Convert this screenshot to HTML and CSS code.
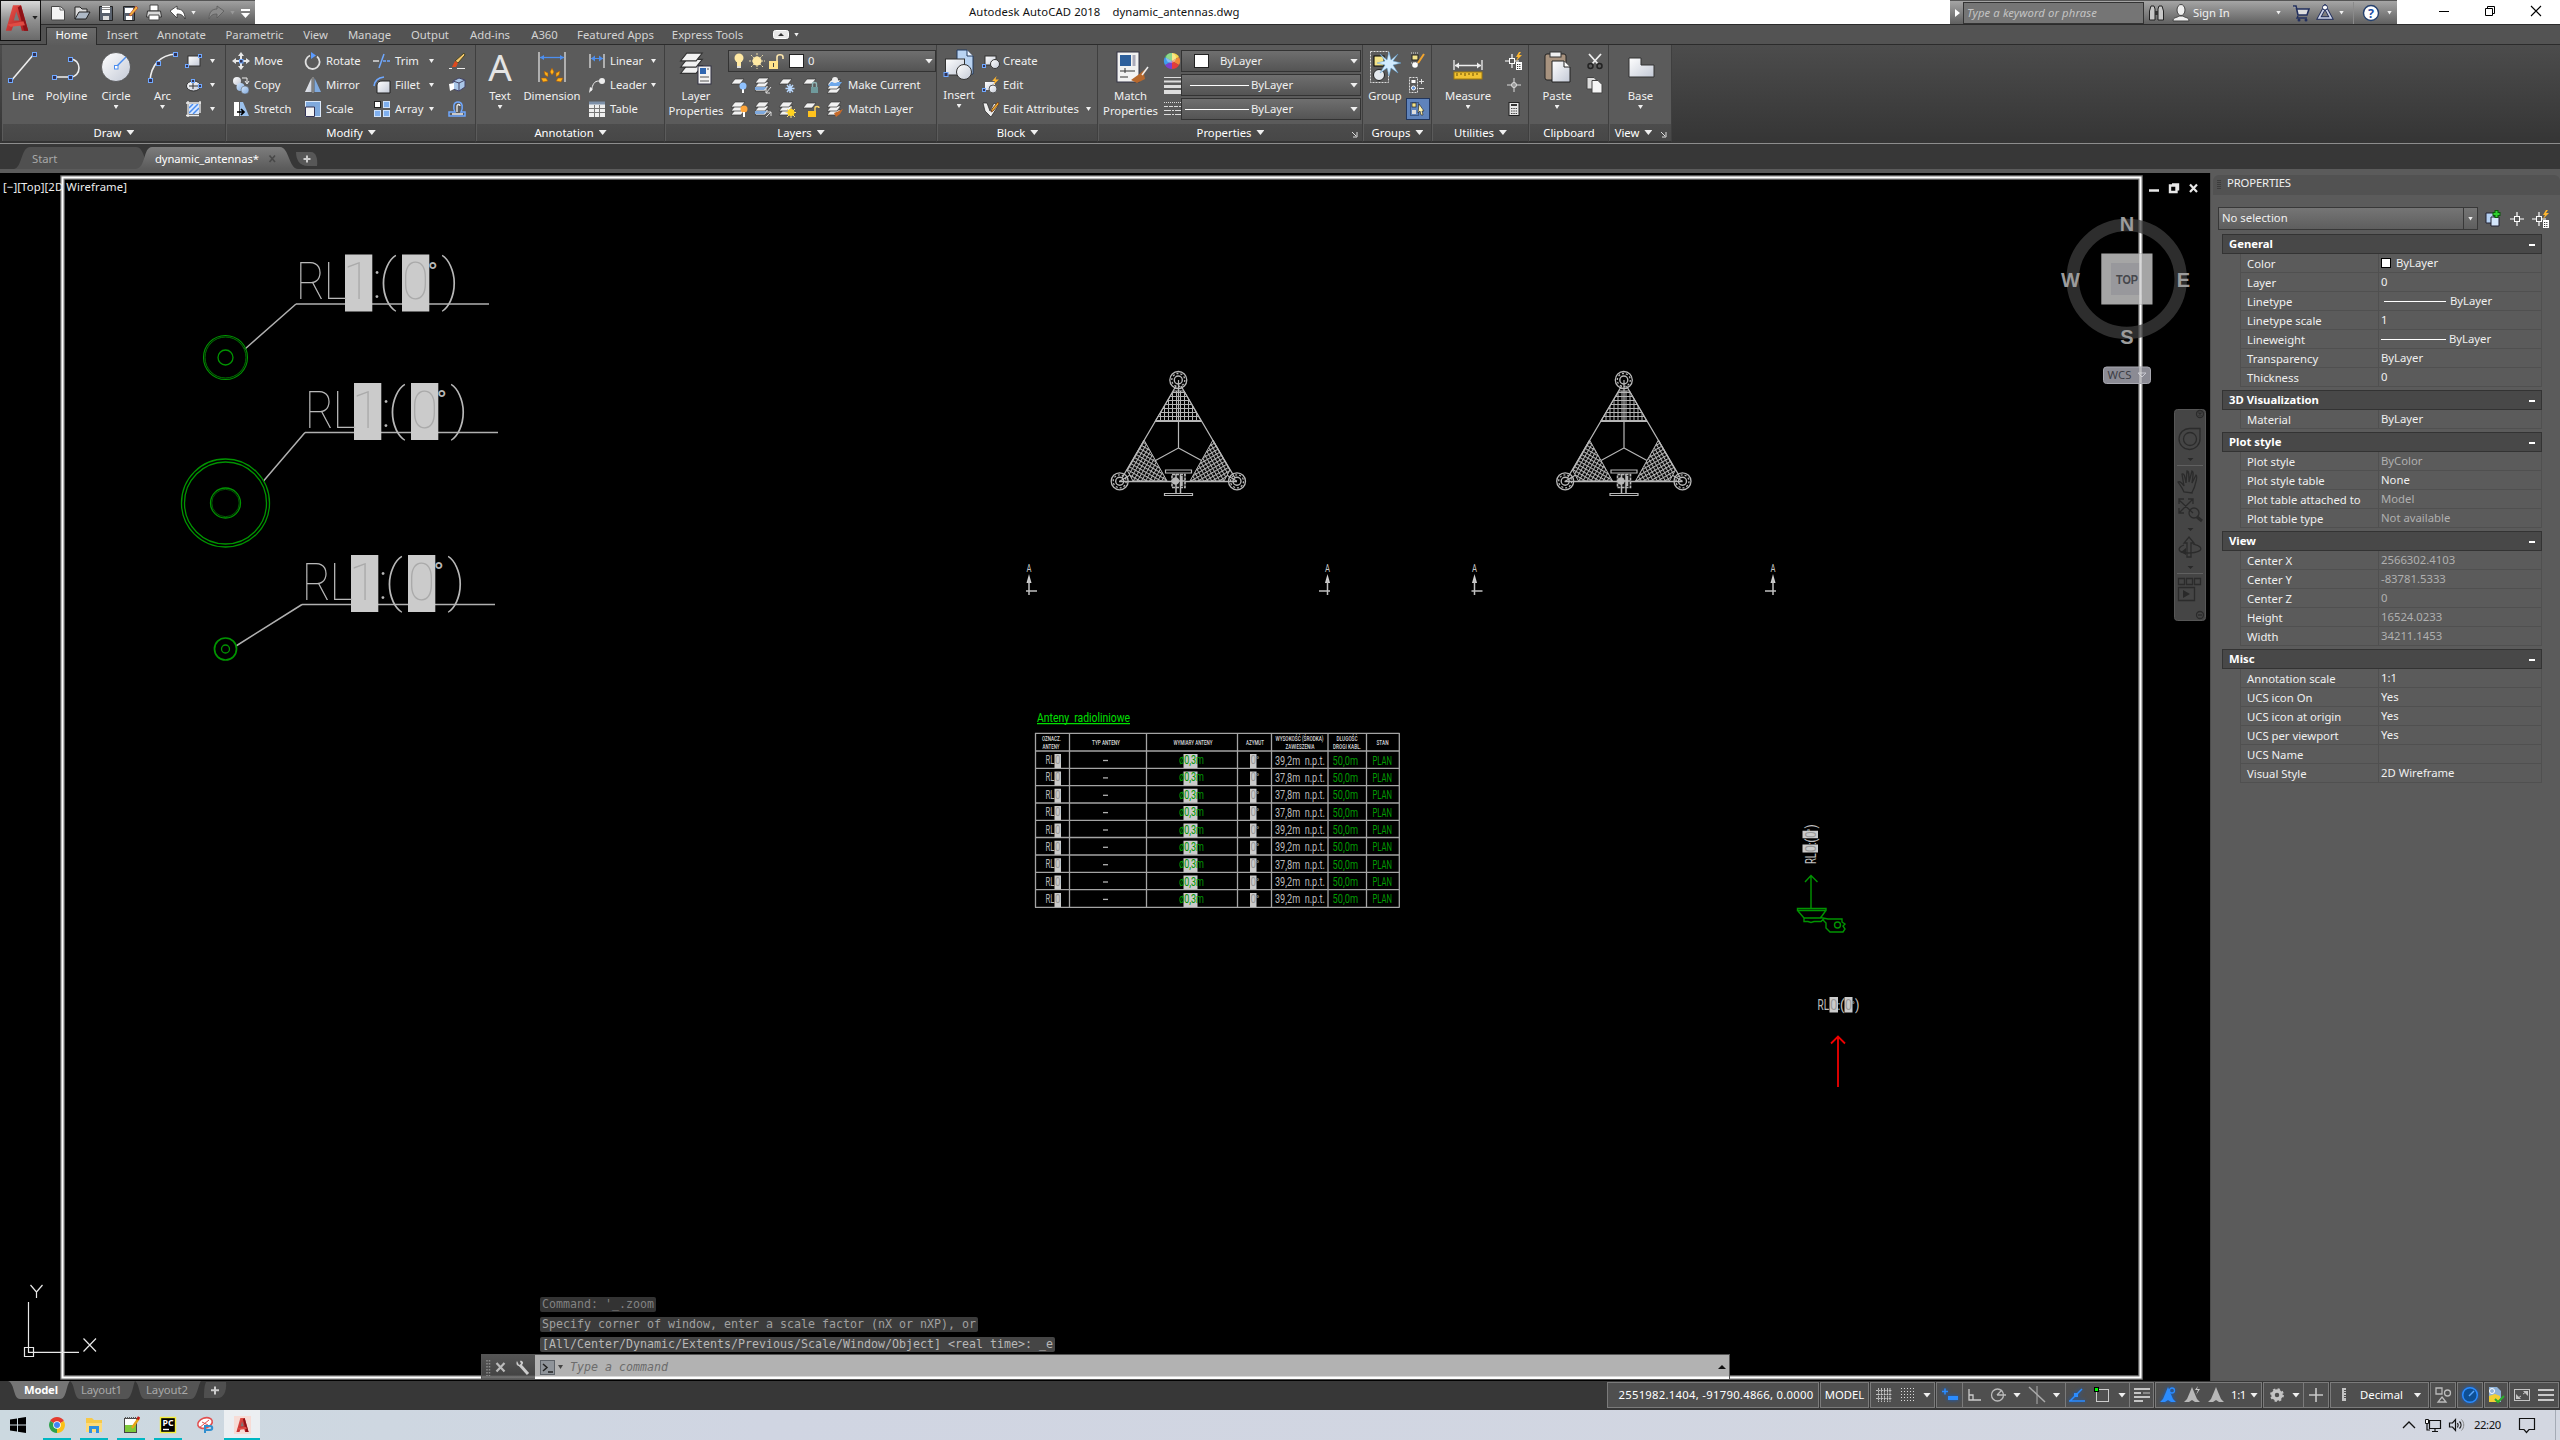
FILE: index.html
```html
<!DOCTYPE html>
<html lang="en">
<head>
<meta charset="utf-8">
<title>Autodesk AutoCAD 2018 - dynamic_antennas.dwg</title>
<link rel="stylesheet" href="styles.css">
</head>
<body>
<svg class="defs" width="0" height="0">
  <defs>
    <linearGradient id="gw" x1="0" y1="0" x2="1" y2="1"><stop offset="0" stop-color="#fff"/><stop offset="1" stop-color="#c3c9d6"/></linearGradient>
    <linearGradient id="gb" x1="0" y1="0" x2="1" y2="1"><stop offset="0" stop-color="#d5e6fa"/><stop offset="1" stop-color="#7fa9dd"/></linearGradient>
    <linearGradient id="gr" x1="0" y1="0" x2="1" y2="1"><stop offset="0" stop-color="#ef5b50"/><stop offset="1" stop-color="#a3141a"/></linearGradient>
    <symbol id="sheets" viewBox="0 0 18 18"><g fill="#f2f2f2" stroke="#333" stroke-width=".7"><path d="M5 10h10l-4 5H1z"/><path d="M5 6h10l-4 5H1z"/><path d="M5 2h10l-4 5H1z"/></g></symbol>
    <symbol id="sheet" viewBox="0 0 18 18"><path d="M5 3h9l-4 5H1z" fill="#f2f2f2" stroke="#333" stroke-width=".7"/></symbol>
    <symbol id="spark" viewBox="0 0 8 8"><path d="M5 0 1 4.500h2.500L2 8l5-5H4z" fill="#ffb62e"/></symbol>
    <symbol id="acad" viewBox="0 0 30 34"><path d="M10 1h10l9 32h-8l-2-8h-8l-3 8H1z" fill="url(#gr)"/><path d="M14 9l-3 11h7z" fill="#7a7a7a"/><path d="M20 1l9 32h-5L16 4z" fill="#8e1116"/><path d="M3 25l20-4 2 5-18 2z" fill="#e04b43"/></symbol>
    <symbol id="person" viewBox="0 0 18 18"><path d="M9 1l2 5 3 7 3 3-5 0-3-2-3 2H1l3-3 3-7z" fill="currentColor"/></symbol>
    <symbol id="quick" viewBox="0 0 18 18"><path d="M7 2v14M0 9h14" stroke="#fff" stroke-width="1.2"/><rect x="4.500" y="6.500" width="5" height="5" fill="#5b5b5b" stroke="#fff"/><path d="M14 0l-3 5h2l-2 4 6-6h-3l2-3z" fill="#ffb62e"/><rect x="11" y="10" width="6" height="8" fill="#fff"/><path d="M12 12.500h4M12 14.500h4M12 16.500h4" stroke="#333" stroke-dasharray="1 .8"/></symbol>
  </defs>
</svg>
<div class="app">
<header class="titlebar">
  <div class="appbtn"><svg width="24" height="28"><use href="#acad"/></svg><i class="c dark"></i></div>
  <div class="qat">
    <svg width="18" height="18"><path d="M2.500 2.500h9l4 3.500v10h-13z" fill="#f4f4f4" stroke="#444"/><path d="M11 2v4h5" fill="none" stroke="#666"/></svg>
    <svg width="18" height="18"><path d="M2 15V3h5l2 2h5v3" fill="#ddd" stroke="#222"/><path d="M2 15l4-7h11l-4 7z" fill="#aeb9c6" stroke="#222"/></svg>
    <svg width="18" height="18"><path d="M2.500 2.500h13v14h-13z" fill="#59616d" stroke="#222"/><path d="M5 2h8v7H5z" fill="#fff"/><path d="M5 3.500h8M5 5.500h8" stroke="#888"/><path d="M6 12h6v4H6z" fill="#ddd"/></svg>
    <svg width="18" height="18"><path d="M2.500 2.500h11v14h-11z" fill="#59616d" stroke="#222"/><path d="M4 4h8v5H4zM5 12h6v4H5z" fill="#fff"/><path d="M8 11l7-9 2 2-7 8z" fill="#f3b33e" stroke="#a33" stroke-width=".6"/></svg>
    <svg width="18" height="18"><path d="M5 1h8v6H5z" fill="#fff" stroke="#444"/><path d="M2.500 7h13l1 6h-15z" fill="#d9d9d9" stroke="#333"/><path d="M4 11h10v5H4z" fill="#fff" stroke="#444"/></svg>
    <svg width="18" height="18"><path d="M1 7l7-5v3c5 0 8 3 8 10-2-4-4-5-8-5v4z" fill="#fff" stroke="#333" stroke-width=".8"/></svg>
    <i class="c"></i>
    <svg width="18" height="18"><path d="M17 7l-7-5v3c-5 0-8 3-8 10 2-4 4-5 8-5v4z" fill="#8b8b8b" stroke="#5b5b5b" stroke-width=".8"/></svg>
    <i class="c dim"></i>
    <svg class="more" width="9" height="12"><path d="M0 3h9" stroke="#fff" stroke-width="2"/><path d="M0 6h9l-4.500 5z" fill="#fff"/></svg>
  </div>
  <div class="caption"><span>Autodesk AutoCAD 2018</span><span>dynamic_antennas.dwg</span></div>
  <div class="info">
    <div class="arrow"><svg width="5" height="8"><path d="M0 0l5 4-5 4z" fill="#fff"/></svg></div>
    <div class="search">Type a keyword or phrase</div>
    <svg class="bino" width="18" height="18"><g fill="#c8c8c8" stroke="#222"><path d="M3 2h3l1 3v11H1.500V7z"/><path d="M11 2h3l1.500 5v9H10V5z"/></g><path d="M7 7h3v4H7z" fill="#333"/></svg>
    <svg class="user" width="18" height="18"><ellipse cx="9" cy="6" rx="4" ry="5.500" fill="#eee" stroke="#444"/><path d="M1 17c0-4 4-3 6-5h4c2 2 6 1 6 5z" fill="#eee" stroke="#444"/></svg>
    <span class="sign">Sign In</span><i class="c"></i>
    <svg class="cart" width="18" height="18"><path d="M1 2h3l2 9h9l2-6H5" fill="#ddd" stroke="#23305e" stroke-width="1.6"/><path d="M6 12l-1 2h10" fill="none" stroke="#23305e" stroke-width="1.400"/><circle cx="7" cy="16" r="1.500" fill="#23305e"/><circle cx="14" cy="16" r="1.500" fill="#23305e"/></svg>
    <svg class="a360" width="18" height="18"><path d="M9 3L3 14h12z" fill="none" stroke="#23305e" stroke-width="3.600"/><path d="M9 3L3 14h12z" fill="none" stroke="#cfd6ea" stroke-width="1.600"/><circle cx="9" cy="3.500" r="2.500" fill="#fff" stroke="#23305e"/></svg>
    <i class="c"></i><b class="vsep"></b>
    <svg class="help" width="18" height="18"><circle cx="9" cy="9" r="7.500" fill="#fff" stroke="#24406e" stroke-width="1.400"/><text x="9" y="13.500" text-anchor="middle" font-size="12.500" font-weight="700" fill="#1d4fa5">?</text></svg>
    <i class="c"></i>
  </div>
  <div class="winbtns">
    <svg width="12" height="12"><path d="M1 6.500h10" stroke="#000"/></svg>
    <svg width="12" height="12"><path d="M1.500 3.500h7v7h-7zM3.500 3.500v-2h7v7h-2" fill="none" stroke="#000"/></svg>
    <svg width="12" height="12"><path d="M1 1l10 10M11 1L1 11" stroke="#000" stroke-width="1.100"/></svg>
  </div>
</header>

<nav class="tabs">
  <span class="on">Home</span><span>Insert</span><span>Annotate</span><span>Parametric</span><span>View</span><span>Manage</span><span>Output</span><span>Add-ins</span><span>A360</span><span>Featured Apps</span><span>Express Tools</span>
  <div class="mini"><svg width="16" height="9"><rect x=".5" y=".5" width="15" height="8" rx="2" fill="#e8e8e8" stroke="#fff"/><path d="M5 6h6L8 3z" fill="#333"/></svg><i class="c"></i></div>
</nav>

<div class="ribbon">
  <section class="panel draw"><div class="body">
    <div class="big"><svg width="34" height="36"><path d="M5 32L28 5" stroke="#eee" stroke-width="1.600"/><g fill="#335" stroke="#6fa8ff"><rect x="2.500" y="29.500" width="4" height="4"/><rect x="26.500" y="3.500" width="4" height="4"/></g></svg>Line</div>
    <div class="big"><svg width="34" height="36"><path d="M4 28h16c12 0 12-18 0-18" fill="none" stroke="#eee" stroke-width="1.600"/><g fill="#335" stroke="#6fa8ff"><rect x="2.500" y="26.500" width="4" height="4"/><rect x="18.500" y="26.500" width="4" height="4"/><rect x="18.500" y="8.500" width="4" height="4"/></g></svg>Polyline</div>
    <div class="big"><svg width="34" height="36"><circle cx="17" cy="18" r="14.500" fill="url(#gw)" stroke="#333" stroke-width=".6"/><path d="M17 18l10-10" stroke="#4a8df0" stroke-width="1.400"/><rect x="15.500" y="16.500" width="3.500" height="3.500" fill="#fff" stroke="#4a8df0"/></svg>Circle<i class="c"></i></div>
    <div class="big"><svg width="34" height="36"><path d="M4 32C5 16 14 6 30 5" fill="none" stroke="#eee" stroke-width="1.600"/><g fill="#335" stroke="#6fa8ff"><rect x="2.500" y="29.500" width="4" height="4"/><rect x="10.500" y="12.500" width="4" height="4"/><rect x="27.500" y="3.500" width="4" height="4"/></g></svg>Arc<i class="c"></i></div>
    <div class="col">
      <div class="row"><svg width="18" height="18"><rect x="3" y="4" width="12" height="10" fill="url(#gw)" stroke="#333"/><rect x=".5" y="12.500" width="3" height="3" fill="#335" stroke="#6fa8ff"/><rect x="13.500" y="2.500" width="3" height="3" fill="#335" stroke="#6fa8ff"/></svg><i class="c"></i></div>
      <div class="row"><svg width="18" height="18"><ellipse cx="8.500" cy="10" rx="7" ry="5" fill="url(#gw)" stroke="#333"/><path d="M8 6v7M4 10h9" stroke="#333"/><rect x="6.500" y="3.500" width="3" height="3" fill="#335" stroke="#6fa8ff"/><rect x="13.500" y="8.500" width="3" height="3" fill="#335" stroke="#6fa8ff"/></svg><i class="c"></i></div>
      <div class="row"><svg width="18" height="18"><rect x="4" y="4" width="10" height="10" fill="#d7e7ff"/><path d="M4 8l4-4M4 13l9-9M8 14l6-6" stroke="#4a8df0" stroke-width="1.500"/><path d="M3 1v16M1 3h15M15 1v12M1 15.500h13" stroke="#eee" stroke-width="1.300"/></svg><i class="c"></i></div>
    </div></div>
    <h3>Draw <i class="c lg"></i></h3></section>

  <section class="panel modify"><div class="body">
    <div class="col">
      <div class="row"><svg width="18" height="18"><path d="M9 0l3 4h-2v3H8V4H6zM9 18l3-4h-2v-3H8v3H6zM0 9l4-3v2h3v2H4v2zM18 9l-4-3v2h-3v2h3v2z" fill="#e8e8e8"/><rect x="7.500" y="7.500" width="3.500" height="3.500" fill="#335" stroke="#6fa8ff"/></svg>Move</div>
      <div class="row"><svg width="18" height="18"><circle cx="5" cy="5" r="4" fill="url(#gw)"/><circle cx="8.500" cy="11" r="4" fill="url(#gb)"/><circle cx="13" cy="14" r="4" fill="url(#gb)" stroke="#555" stroke-width=".5"/><path d="M10 2h5v5m-2-2l2 3 2-3" fill="none" stroke="#eee"/></svg>Copy</div>
      <div class="row"><svg width="18" height="18"><path d="M2 2h5v14H2z" fill="#fff"/><path d="M8 2l3 0 6 14H8z" fill="#9bc1ec"/><path d="M5 12h7m-3-3l3 3-3 3" fill="none" stroke="#000" stroke-width="1.700"/></svg>Stretch</div>
    </div>
    <div class="col">
      <div class="row"><svg width="18" height="18"><path d="M13 4.500A7 7 0 1 1 6 3.500" fill="none" stroke="#e0e0e0" stroke-width="1.800"/><path d="M7 0l5 3.500L7 7z" fill="#5b9bff"/></svg>Rotate</div>
      <div class="row"><svg width="18" height="18"><path d="M7.500 2v14H1z" fill="url(#gw)"/><path d="M10.500 2v14H17z" fill="#7fa9dd"/><path d="M9 1v16" stroke="#bbb" stroke-width=".8"/></svg>Mirror</div>
      <div class="row"><svg width="18" height="18"><rect x="1.500" y="1.500" width="15" height="15" fill="#7fa9dd" stroke="#dce9fa"/><path d="M1.500 7h9v9.500h-9z" fill="#f4f4f4" stroke="#335"/></svg>Scale</div>
    </div>
    <div class="col wide">
      <div class="row"><svg width="18" height="18"><path d="M0 9h6" stroke="#ddd" stroke-width="1.500"/><path d="M6 16L11 2" stroke="#6fa8ff" stroke-width="1.500"/><path d="M10 9h8" stroke="#6fa8ff" stroke-width="1.500" stroke-dasharray="3 1"/></svg>Trim<i class="c"></i></div>
      <div class="row"><svg width="18" height="18"><path d="M4 17V9c0-3 3-4 5-4h8v12z" fill="url(#gw)" stroke="#222"/><path d="M1 10C2 4 5 2 11 1" fill="none" stroke="#6fa8ff" stroke-width="1.600"/></svg>Fillet<i class="c"></i></div>
      <div class="row"><svg width="18" height="18"><rect x="1.500" y="1.500" width="6" height="6" fill="#fff" stroke="#222"/><g fill="#7fb0f0" stroke="#cfe2fb"><rect x="10.500" y="1.500" width="6" height="6"/><rect x="1.500" y="10.500" width="6" height="6"/><rect x="10.500" y="10.500" width="6" height="6"/></g></svg>Array<i class="c"></i></div>
    </div>
    <div class="col">
      <div class="row"><svg width="18" height="18"><path d="M16 1l1 2-7 8-3-2z" fill="#f5c56b" stroke="#442"/><path d="M7 9l3 2-2 4H4z" fill="#e14a1d"/><path d="M1 16.500h3M9 16.500h8" stroke="#eee"/></svg></div>
      <div class="row"><svg width="18" height="18"><path d="M5 5l6-3 6 2v7l-6 4-6-2z" fill="#a9c6e8" stroke="#446"/><path d="M1 8l5-1v6l-4 2z" fill="#fff"/><path d="M11 7v8M5 5l6 2 6-3" stroke="#446" fill="none"/></svg></div>
      <div class="row"><svg width="18" height="18"><path d="M1 16h16v-4h-4c2-4 2-10-3-10S5 8 7 12H1z" fill="none" stroke="#6fa8ff" stroke-width="1.500"/><path d="M4 14h11M9 12V6c0-2 3-2 3 0" stroke="#eee" fill="none" stroke-width="1.300"/></svg></div>
    </div></div>
    <h3>Modify <i class="c lg"></i></h3></section>

  <section class="panel annotation"><div class="body">
    <div class="big"><span class="bigA">A</span>Text<i class="c"></i></div>
    <div class="big"><svg width="34" height="36"><path d="M4 3v30M30 3v30" stroke="#ddd" stroke-width="1.300"/><path d="M5 8.500h24" stroke="#4d8ff0" stroke-width="1.300"/><path d="M5 8.500l4-2.500v5zM29 8.500l-4-2.500v5z" fill="#4d8ff0"/><g fill="#ffb31a" stroke="#a4560c" stroke-width=".6"><path d="M17 19l2 4-2 3-2-3zM9 22l4 2 0 4-3-2zM25 22l-4 2 0 4 3-2zM6 29l5 0 2 3-5 1zM28 29l-5 0-2 3 5 1z"/></g></svg>Dimension</div>
    <div class="col wide">
      <div class="row"><svg width="18" height="18"><path d="M2 2v14M16 2v14" stroke="#ddd" stroke-width="1.300"/><path d="M3 6.500h12" stroke="#4d8ff0"/><path d="M3 6.500l4-3v6zM15 6.500l-4-3v6z" fill="#4d8ff0"/></svg>Linear<i class="c"></i></div>
      <div class="row"><svg width="18" height="18"><circle cx="14" cy="5" r="3" fill="#eee"/><path d="M11 5C6 5 5 8 3 15" fill="none" stroke="#eee"/><path d="M1 17l1-6 3 2z" fill="#eee"/></svg>Leader<i class="c"></i></div>
      <div class="row"><svg width="18" height="18"><rect x="1" y="2" width="16" height="15" fill="#eee"/><path d="M1 3h16" stroke="#7d90a8" stroke-width="3"/><path d="M1 8.500h16M1 12.500h16M6.500 5v12M11.500 5v12" stroke="#777"/></svg>Table</div>
    </div></div>
    <h3>Annotation <i class="c lg"></i></h3></section>

  <section class="panel layers"><div class="body">
    <div class="big"><svg width="36" height="36"><use href="#sheets" x="1" y="1" width="28" height="28"/><rect x="20" y="17" width="13" height="18" fill="#f3f3f3" stroke="#334"/><rect x="22" y="19" width="6" height="6" fill="#2f66b0"/><path d="M29 20h2M22 28h9M22 32h9" stroke="#555"/></svg>Layer<br>Properties</div>
    <div class="col">
      <div class="combo layer"><svg width="14" height="18"><circle cx="6" cy="6" r="4.500" fill="#ffe9a3"/><path d="M4 9h4v5H4z" fill="#ffe9a3"/><path d="M4 15h4" stroke="#ddd" stroke-width="2"/></svg><svg width="18" height="18"><path d="M9 1v16M1 9h16M3 3l12 12M15 3L3 15" stroke="#e8d9a8" stroke-dasharray="2 1"/><circle cx="9" cy="9" r="4.500" fill="#ffe9a3"/></svg><svg width="18" height="18"><rect x="2" y="9" width="9" height="8" fill="#ffe38b"/><path d="M10 9V5c0-3 6-3 6 0v2" fill="none" stroke="#ffe9b0" stroke-width="1.600"/><path d="M6.500 11v4" stroke="#444"/></svg><b class="sw"></b>0<i class="c lg"></i></div>
      <div class="row icons"><svg width="18" height="18"><use href="#sheet"/><path d="M13 12v5" stroke="#fff" stroke-width="2"/><circle cx="13" cy="10" r="3.500" fill="#8fc2ff"/></svg><svg width="18" height="18"><use href="#sheets"/><path d="M1 11h12l-3 3H1z" fill="#7fa9dd"/><path d="M17 11l-5 6m0-4v4h4" stroke="#ddd" fill="none"/></svg><svg width="18" height="18"><use href="#sheet"/><path d="M12 8v9M7.500 12.500h9M9 9l6 7M15 9l-6 7" stroke="#b9d9ff" stroke-width="1.400"/></svg><svg width="18" height="18"><use href="#sheet"/><rect x="9" y="11" width="7" height="6" fill="#6f9a9c"/><path d="M10.500 11V8c0-2 4-2 4 0v3" fill="none" stroke="#8fb4b5" stroke-width="1.400"/></svg><svg width="18" height="18"><use href="#sheets" y="2"/><path d="M5 6h11l-3 4H2z" fill="#6fa8ea"/><circle cx="9" cy="4" r="3" fill="#eee"/></svg>Make Current</div>
      <div class="row icons"><svg width="18" height="18"><use href="#sheets"/><circle cx="14" cy="9" r="3.500" fill="#ffa63a"/><path d="M14 12v5" stroke="#fff" stroke-width="2"/></svg><svg width="18" height="18"><use href="#sheets"/><path d="M1 11h12l-3 3H1z" fill="#7fa9dd"/><path d="M12 17l5-5m-4 0h4v4" stroke="#ddd" fill="none"/></svg><svg width="18" height="18"><use href="#sheets"/><path d="M13 7v11M7.500 12.500h11M9 9l8 8M17 9l-8 8" stroke="#ffe277"/><circle cx="13" cy="12.500" r="3.500" fill="#ffd21f"/></svg><svg width="18" height="18"><use href="#sheet"/><rect x="6" y="11" width="8" height="6" fill="#ffc21c"/><path d="M13 11V8c0-2 4-2 4 0" fill="none" stroke="#ffd766" stroke-width="1.400"/></svg><svg width="18" height="18"><use href="#sheets"/><path d="M17 9l-3 5-4 3-2-4 5-2z" fill="#c66a2a"/></svg>Match Layer</div>
    </div></div>
    <h3>Layers <i class="c lg"></i></h3></section>

  <section class="panel block"><div class="body">
    <div class="big ins"><svg width="34" height="36"><path d="M15 2h10l6 6v18H15z" fill="#b9d3f2" stroke="#223a5f"/><path d="M25 2v6h6" fill="#eef5ff" stroke="#223a5f"/><rect x="3.500" y="11" width="19" height="16" fill="url(#gw)" stroke="#333"/><circle cx="22" cy="24" r="7.500" fill="url(#gw)" stroke="#333"/><rect x="2" y="24.500" width="4" height="4" fill="#335" stroke="#6fa8ff"/></svg>Insert<i class="c"></i></div>
    <div class="col wide">
      <div class="row"><svg width="18" height="18"><rect x="3" y="4" width="11" height="9" fill="url(#gw)" stroke="#333"/><circle cx="13" cy="12" r="4.500" fill="url(#gw)" stroke="#333"/><rect x=".5" y="12.500" width="3" height="3" fill="#335" stroke="#6fa8ff"/></svg>Create</div>
      <div class="row"><svg width="18" height="18"><rect x="3" y="6" width="10" height="8" fill="url(#gw)"/><circle cx="11" cy="13" r="4" fill="url(#gw)" stroke="#555"/><rect x=".5" y="12.500" width="3" height="3" fill="#335" stroke="#6fa8ff"/><use href="#spark" x="9" y="0" width="9" height="9"/></svg>Edit</div>
      <div class="row"><svg width="18" height="18"><path d="M1 3h4l3 8 4-8 4 3-7 11L3 11z" fill="#eee" stroke="#222" stroke-width=".7"/><path d="M16 2l1 2-6 7-2 1 1-3z" fill="#f5b52e" stroke="#742"/></svg>Edit Attributes<i class="c"></i></div>
    </div></div>
    <h3>Block <i class="c lg"></i></h3></section>

  <section class="panel props"><div class="body">
    <div class="big"><svg width="36" height="36"><rect x="4" y="3" width="22" height="30" fill="#f2f2f2" stroke="#334"/><rect x="7" y="6" width="11" height="11" fill="#2d5f9c"/><path d="M21 6v11" stroke="#aab" stroke-width="3"/><path d="M7 22h15M12 19v5M7 28h8" stroke="#333"/><path d="M34 19l-4 3-5 4-7 5 6 3 8-4-1-5z" fill="#b7682c"/><path d="M35 18l-6 8" stroke="#eee" stroke-width="1.500"/></svg>Match<br>Properties</div>
    <div class="col mid">
      <svg width="18" height="22"><g transform="translate(9 11)"><path d="M0 0V-8A8 8 0 0 1 7 -4z" fill="#f7d84a"/><path d="M0 0L7-4A8 8 0 0 1 7 4z" fill="#f08a3a"/><path d="M0 0L7 4A8 8 0 0 1 0 8z" fill="#e23b3b"/><path d="M0 0V8A8 8 0 0 1-7 4z" fill="#7a3fd0"/><path d="M0 0L-7 4A8 8 0 0 1-7-4z" fill="#3f9cf0"/><path d="M0 0L-7-4A8 8 0 0 1 0-8z" fill="#4fc04f"/><circle cx="-1" cy="-3" r="5" fill="#fff" opacity=".35"/></g></svg>
      <svg width="18" height="22"><path d="M1 3.500h17" stroke="#ddd"/><path d="M1 7.500h17" stroke="#ddd" stroke-width="2"/><path d="M1 12.500h17" stroke="#ddd" stroke-width="3"/><path d="M1 18h17" stroke="#ddd" stroke-width="4"/></svg>
      <svg width="18" height="22"><path d="M1 4.500h17" stroke="#ddd" stroke-dasharray="1 1"/><path d="M1 8.500h17" stroke="#ddd" stroke-dasharray="4 1"/><path d="M1 12.500h17M1 16.500h17" stroke="#ddd" stroke-dasharray="7 1 2 1"/></svg>
    </div>
    <div class="col combos">
      <div class="combo c1"><b class="sw"></b>ByLayer<i class="c lg"></i></div>
      <div class="combo c2"><b class="ln"></b>ByLayer<i class="c lg"></i></div>
      <div class="combo c3"><b class="ln"></b>ByLayer<i class="c lg"></i></div>
    </div></div>
    <h3>Properties <i class="c lg"></i><svg class="dlg" width="6" height="7"><path d="M0 1l4 4M5 1v5H1" stroke="#ddd" fill="none"/></svg></h3></section>

  <section class="panel groups"><div class="body">
    <div class="big"><svg width="36" height="36"><rect x="3.500" y="2.500" width="18" height="31" fill="none" stroke="#ddd" stroke-dasharray="2 1"/><rect x="7" y="7" width="10" height="10" fill="#f3e38a" stroke="#000"/><circle cx="12" cy="26" r="5.500" fill="#e4e9ee" stroke="#222"/><path d="M22 3l2 8 7-6-5 7 8 2-8 2 5 8-7-5-2 8-2-8-7 5 5-8-8-2 8-2-5-7 7 6z" fill="#d2ecff" stroke="#5f9fd0" stroke-width=".5"/></svg>Group</div>
    <div class="col">
      <div class="row"><svg width="22" height="22"><path d="M5 3h8M5 13h8" stroke="#ddd" stroke-dasharray="1 1"/><rect x="6" y="5" width="6" height="5" fill="#f3e38a" stroke="#222"/><circle cx="9" cy="15" r="2.800" fill="#fff"/><path d="M18 4l-6 9" stroke="#f3a52e" stroke-width="2"/></svg></div>
      <div class="row"><svg width="22" height="22"><rect x="3.500" y="3.500" width="8" height="15" fill="none" stroke="#ddd" stroke-dasharray="2 1"/><rect x="5.500" y="6" width="4" height="3" fill="#fff"/><circle cx="7.500" cy="14" r="2" fill="#5d8fd6" stroke="#fff"/><path d="M13 7.500h5M15.500 5v5M13 14.500h5" stroke="#ddd"/></svg></div>
      <div class="row"><svg class="sel" width="24" height="22"><rect x=".5" y=".5" width="23" height="21" fill="#5f83bb" stroke="#22365c"/><rect x="4.500" y="4.500" width="8" height="13" fill="none" stroke="#203050" stroke-dasharray="1 1"/><rect x="6" y="5" width="4" height="4" fill="#f3e38a" stroke="#111" stroke-width=".6"/><rect x="6" y="12" width="4" height="4" fill="#ddd"/><path d="M13 6l5 7-2 0 1 4-2 0-1-4-2 2z" fill="#fff3b0" stroke="#222" stroke-width=".6"/></svg></div>
    </div></div>
    <h3>Groups <i class="c lg"></i></h3></section>

  <section class="panel util"><div class="body">
    <div class="big"><svg width="34" height="36"><path d="M3 11v10M31 11v10M4 16.500h26" stroke="#eee" stroke-width="1.300"/><path d="M4 16.500l4-3v6zM30 16.500l-4-3v6z" fill="#eee"/><rect x="3" y="23" width="28" height="7" fill="#f1c232" stroke="#a07a10"/><path d="M6 24v3M10 24v2M14 24v3M18 24v2M22 24v3M26 24v2" stroke="#6b4e05"/></svg>Measure<i class="c"></i></div>
    <div class="col">
      <div class="row"><svg width="18" height="18"><use href="#quick"/></svg></div>
      <div class="row"><svg width="18" height="18"><path d="M9 2v14M2 9h14" stroke="#ddd"/><circle cx="9" cy="9" r="2.500" fill="#999" stroke="#ddd"/></svg></div>
      <div class="row"><svg width="18" height="18"><rect x="4" y="2.500" width="10" height="13" fill="#e6e6e6" stroke="#222"/><path d="M6 5h6" stroke="#333" stroke-width="2"/><path d="M6 8.500h6M6 11h6M6 13.500h6" stroke="#444" stroke-dasharray="1.500 .8"/></svg></div>
    </div></div>
    <h3>Utilities <i class="c lg"></i></h3></section>

  <section class="panel clip"><div class="body">
    <div class="big"><svg width="34" height="36"><rect x="5" y="5" width="21" height="26" rx="2" fill="#a8937f" stroke="#222"/><rect x="10" y="3" width="11" height="5" fill="#f0f0f0" stroke="#333"/><path d="M12 12h12l6 6v15H12z" fill="url(#gw)" stroke="#222"/><path d="M24 12v6h6" fill="#fff" stroke="#222"/></svg>Paste<i class="c"></i></div>
    <div class="col">
      <div class="row"><svg width="18" height="18"><path d="M3 2l9 10M15 2L6 12" stroke="#eee" stroke-width="1.800"/><circle cx="4.500" cy="14" r="2.500" fill="none" stroke="#222" stroke-width="1.500"/><circle cx="13.500" cy="14" r="2.500" fill="none" stroke="#222" stroke-width="1.500"/></svg></div>
      <div class="row"><svg width="18" height="18"><path d="M1 1.500h7l3 3V13H1z" fill="#ddd" stroke="#444"/><path d="M6 4.500h6l4 4V17H6z" fill="#f6f6f6" stroke="#444"/></svg></div>
    </div></div>
    <h3>Clipboard</h3></section>

  <section class="panel view"><div class="body">
    <div class="big"><svg width="34" height="36"><path d="M5 9h12v7h13v12H5z" fill="url(#gw)" stroke="#333"/></svg>Base<i class="c"></i></div></div>
    <h3>View <i class="c lg"></i><svg class="dlg" width="6" height="7"><path d="M0 1l4 4M5 1v5H1" stroke="#ddd" fill="none"/></svg></h3></section>
</div>

<div class="files">
  <svg width="340" height="26" viewBox="0 144 340 26">
    <defs><linearGradient id="ta" x1="0" y1="0" x2="0" y2="1"><stop offset="0" stop-color="#7d7d7d"/><stop offset="1" stop-color="#5b5b5b"/></linearGradient></defs>
    <path d="M14 169c8-1 7-22 16-22h106c9 0 9 20 14 22z" fill="#505050"/>
    <path d="M136 169c10-1 7-22 16-22h128c9 0 9 22 18 22z" fill="url(#ta)"/>
    <path d="M296 152h15c5 0 7 7 6 14h-9c-9 0-12-7-12-14z" fill="#575757"/>
    <path d="M303.500 159h7M307 155.500v7" stroke="#ccc" stroke-width="2"/>
    <path d="M269.500 155.500l5.500 6.500M275 155.500l-5.500 6.500" stroke="#484848" stroke-width="1.600"/>
    <text x="32" y="163" fill="#a8a8a8">Start</text>
    <text x="155" y="163" fill="#fff" textLength="104">dynamic_antennas*</text>
  </svg>
</div>

<main class="work">
  <div class="canvas">
  <svg class="drawing" width="2210" height="1208" viewBox="0 173 2210 1208">
    <defs>
      <pattern id="h0" width="4" height="4" patternUnits="userSpaceOnUse"><path d="M0 .5h4M.5 0v4" stroke="#b5b5b5" stroke-width="1"/></pattern>
      <pattern id="h1" width="3.500" height="3.500" patternUnits="userSpaceOnUse" patternTransform="rotate(30)"><path d="M0 .5h4M.5 0v4" stroke="#b5b5b5" stroke-width="1"/></pattern>
      <pattern id="h2" width="3.500" height="3.500" patternUnits="userSpaceOnUse" patternTransform="rotate(-30)"><path d="M0 .5h4M.5 0v4" stroke="#b5b5b5" stroke-width="1"/></pattern>
      <g id="label"><path d="M296 304h193" stroke="#b0b0b0" stroke-width="1.500"/>
        <path d="M345 254.500h27.300V311.500H345zM402 254.500h27.300V311.500H402z" fill="#cbcbcb"/>
        <g class="cad thin" font-size="52" fill="#b8b8b8"><text x="296" y="299" textLength="29" lengthAdjust="spacingAndGlyphs">R</text><text x="323.500" y="299" textLength="24" lengthAdjust="spacingAndGlyphs">L</text><text x="372.500" y="298">:</text><text x="378" y="299" font-size="56" textLength="19" lengthAdjust="spacingAndGlyphs">(</text><text class="deg" x="427.500" y="281.500" font-size="28">°</text><text x="441" y="299" font-size="56" textLength="19" lengthAdjust="spacingAndGlyphs">)</text></g>
        <g class="cad thin" font-size="52" fill="#aaa"><text x="343" y="299">1</text><text x="402" y="299" textLength="27" lengthAdjust="spacingAndGlyphs">0</text></g>
      </g>
      <g id="node" fill="none" stroke="#b8b8b8"><circle r="8.500" stroke-width="1.300"/><circle r="6.500" stroke-width="1.300" stroke-dasharray="2 2"/><circle r="4" stroke-width="1.400"/></g>
      <g id="tower" fill="none" stroke="#b8b8b8">
        <path d="M1173.500 391h10.500l17.500 30.500H1155z" fill="url(#h0)"/><path d="M1144 440l23 41h-34l-6-11z" fill="url(#h1)"/><path d="M1213 440l-23 41h34l6-11z" fill="url(#h2)"/>
        <path d="M1176 386l-54 92M1181 386l54 92M1119 481.500h118" stroke-width="1.300"/>
        <path d="M1178.500 380v68l-23 12.500M1178.500 448l23 12.500M1119.700 481.300l10-6M1237 481.300l-10-6" stroke-width="1.200"/>
        <use href="#node" x="1178.300" y="380"/><use href="#node" x="1119.700" y="481.300"/><use href="#node" x="1237" y="481.300"/>
        <path d="M1165.500 470h26v3h-26zM1164.500 493.500h28v2h-28z" stroke-width="1.200"/>
        <rect x="1172" y="474.500" width="13" height="13" fill="#111" stroke-width="1.600" stroke-dasharray="3 1"/><circle cx="1175.500" cy="481" r="3.300" fill="#b8b8b8"/>
        <path d="M1176 474v20M1180.500 474v20M1172 481h13M1182 476v10" stroke-width="1.500"/>
      </g>
      <g id="mark"><text x="1029" y="572" text-anchor="middle" font-size="11" class="cad" fill="#c8c8c8" textLength="5" lengthAdjust="spacingAndGlyphs">A</text><path d="M1029 574l2.500 9h-5z" fill="#d0d0d0"/><path d="M1029 580v15" stroke="#c0c0c0" stroke-width="1.500"/></g>
    </defs>
    <rect x="62.500" y="177.500" width="2078" height="1200" fill="none" stroke="#777" stroke-width="4.500"/>
    <rect x="62.500" y="177.500" width="2078" height="1200" fill="none" stroke="#fff" stroke-width="2"/>
    <text x="3" y="191" fill="#eee" textLength="124">[−][Top][2D Wireframe]</text>

    <use href="#label"/><use href="#label" x="9" y="128.500"/><use href="#label" x="6" y="300.500"/>
    <path d="M296 304l-51 45M305 432.500L263.500 481M302 604.500L236 646" stroke="#b0b0b0" stroke-width="1.500"/>
    <g fill="none" stroke="#009400" stroke-width="1.300"><circle cx="225.500" cy="357.500" r="22" stroke-width="1.100"/><circle cx="225.500" cy="357.500" r="20.500" stroke-width=".8"/><circle cx="225.500" cy="357.500" r="7.500"/><circle cx="225.500" cy="503" r="44"/><circle cx="225.500" cy="503" r="41"/><circle cx="225.500" cy="503" r="15"/><circle cx="225.500" cy="503" r="13.700" stroke-width=".6"/><circle cx="225.500" cy="649" r="11" stroke-width="1.700"/><circle cx="225.500" cy="649" r="4"/></g>

    <use href="#tower"/><use href="#tower" x="445.500"/>
    <use href="#mark"/><use href="#mark" x="298.500"/><use href="#mark" x="445.500"/><use href="#mark" x="744"/>
    <path d="M1026 591h11M1319 591h11M1471.500 591h11M1765 591h11" stroke="#c0c0c0" stroke-width="1.500"/>

    <text x="1037" y="722" class="cad" font-size="13.500" fill="#00e000" textLength="93" lengthAdjust="spacingAndGlyphs">Anteny&#160; radioliniowe</text>
    <path d="M1037 723.700h93" stroke="#00e000" stroke-width="1.200"/>
    <path d="M1035 733.300h364.500M1035 751h364.500M1035 768.400h364.500M1035 785.700h364.500M1035 803h364.500M1035 820.400h364.500M1035 837.500h364.500M1035 855h364.500M1035 872.400h364.500M1035 889.700h364.500M1035 907.300h364.500M1035.500 733v174.500M1069.500 733v174.500M1146.500 733v174.500M1237.500 733v174.500M1271.500 733v174.500M1328 733v174.500M1366.500 733v174.500M1399.300 733v174.500" stroke="#a4a4a4" stroke-width="1.300"/>
    <g class="cad hd" font-size="6.300" fill="#dcdcdc" text-anchor="middle">
      <text x="1051.500" y="740.500" textLength="19" lengthAdjust="spacingAndGlyphs">OZNACZ.</text><text x="1051" y="749" textLength="17" lengthAdjust="spacingAndGlyphs">ANTENY</text>
      <text x="1106" y="745.300" textLength="28" lengthAdjust="spacingAndGlyphs">TYP ANTENY</text><text x="1193" y="745.300" textLength="39" lengthAdjust="spacingAndGlyphs">WYMIARY ANTENY</text><text x="1255" y="745.300" textLength="18" lengthAdjust="spacingAndGlyphs">AZYMUT</text>
      <text x="1299.500" y="741" textLength="48" lengthAdjust="spacingAndGlyphs">WYSOKOŚĆ (ŚRODKA)</text><text x="1300" y="749.300" textLength="29" lengthAdjust="spacingAndGlyphs">ZAWIESZENIA</text>
      <text x="1347" y="741" textLength="21" lengthAdjust="spacingAndGlyphs">DŁUGOŚĆ</text><text x="1347" y="749.300" textLength="28" lengthAdjust="spacingAndGlyphs">DROGI KABL.</text><text x="1382.500" y="745.300" textLength="12" lengthAdjust="spacingAndGlyphs">STAN</text>
    </g>
    <defs><g id="tr" class="cad" font-size="12.500" fill="#b8b8b8"><path d="M1054.500 754h6.500v14h-6.500zM1183.500 754h14v14h-14zM1250 754h6.500v14h-6.500z" fill="#cbcbcb"/><text x="1045.500" y="764" textLength="9" lengthAdjust="spacingAndGlyphs">RL</text><text x="1055" y="764" fill="#999" textLength="5.500" lengthAdjust="spacingAndGlyphs">0</text><path d="M1103 760.500h5" stroke="#b0b0b0" stroke-width="1.300"/><text x="1179" y="764" fill="#009400" textLength="25" lengthAdjust="spacingAndGlyphs">ø0,3m</text><text x="1250.500" y="764" fill="#999" textLength="5.500" lengthAdjust="spacingAndGlyphs">0</text><text x="1256" y="763" font-size="9">°</text><text x="1332.500" y="764.500" fill="#009c00" textLength="25.500" lengthAdjust="spacingAndGlyphs">50,0m</text><text x="1372.500" y="764.500" fill="#009c00" textLength="19.500" lengthAdjust="spacingAndGlyphs">PLAN</text></g></defs>
    <use href="#tr"/><use href="#tr" y="17.400"/><use href="#tr" y="34.800"/><use href="#tr" y="52.100"/><use href="#tr" y="69.500"/><use href="#tr" y="86.800"/><use href="#tr" y="104.200"/><use href="#tr" y="121.500"/><use href="#tr" y="138.900"/>
    <g class="cad" font-size="12.500" fill="#bcbcbc"><text x="1275" y="764.500" textLength="50" lengthAdjust="spacingAndGlyphs">39,2m&#160; n.p.t.</text><text x="1275" y="782" textLength="50" lengthAdjust="spacingAndGlyphs">37,8m&#160; n.p.t.</text><text x="1275" y="799.300" textLength="50" lengthAdjust="spacingAndGlyphs">37,8m&#160; n.p.t.</text><text x="1275" y="816.600" textLength="50" lengthAdjust="spacingAndGlyphs">37,8m&#160; n.p.t.</text><text x="1275" y="834" textLength="50" lengthAdjust="spacingAndGlyphs">39,2m&#160; n.p.t.</text><text x="1275" y="851.300" textLength="50" lengthAdjust="spacingAndGlyphs">39,2m&#160; n.p.t.</text><text x="1275" y="868.700" textLength="50" lengthAdjust="spacingAndGlyphs">37,8m&#160; n.p.t.</text><text x="1275" y="886" textLength="50" lengthAdjust="spacingAndGlyphs">39,2m&#160; n.p.t.</text><text x="1275" y="903.400" textLength="50" lengthAdjust="spacingAndGlyphs">39,2m&#160; n.p.t.</text></g>

    <defs><g id="rl" class="cad" font-size="15.500" fill="#c0c0c0"><path d="M12 -13h8.500V2.500H12zM27 -13h8V2.500H27z" fill="#cbcbcb"/><text x="0" y="0" textLength="11.500" lengthAdjust="spacingAndGlyphs">RL</text><text x="12.500" y="0" fill="#999" textLength="7.500" lengthAdjust="spacingAndGlyphs">0</text><text x="20" y="0" font-size="12">:</text><text x="22.500" y="0" textLength="4.500" lengthAdjust="spacingAndGlyphs">(</text><text x="27.500" y="0" fill="#999" textLength="7" lengthAdjust="spacingAndGlyphs">0</text><text x="34" y="-2" font-size="9">°</text><text x="37.500" y="0" textLength="4.500" lengthAdjust="spacingAndGlyphs">)</text></g></defs>
    <use href="#rl" transform="translate(1817.500 1010)"/><use href="#rl" transform="translate(1815.500 864) rotate(-90) scale(.95 1)"/>
    <g fill="none" stroke="#009400" stroke-width="1.400"><path d="M1811 909v-33.500M1805 882l6-6.500 6.500 6.500M1797.500 908.500h28.500v2h-28.500zM1798 911l6 7h16.500l5-7M1804 918v3.500h4l3 1 3-1h7l3-3M1820 917.500l8 1.500h14v3l3 2-2 2 2 3-2 3h-13l-4-4v-5l-3-3"/><circle cx="1837.500" cy="925" r="3"/></g>
    <path d="M1838 1087v-50M1831 1043.500l7-7 7 7" fill="none" stroke="#f00000" stroke-width="1.800"/>

    <g fill="none" stroke="#e8e8e8" stroke-width="1.200"><path d="M28.500 1302v50.300H79M24.500 1347.500h9v9h-9zM30.500 1285l6 7v6M42.500 1285l-6 7M83.500 1338.500l12.500 13M96 1338.500l-12.500 13"/></g>

    <circle cx="2126.700" cy="279" r="54" fill="none" stroke="#3c3c3c" stroke-opacity=".75" stroke-width="12.500"/>
    <g class="nesw" fill="#9c9c9c" text-anchor="middle" font-size="20" font-weight="700"><text x="2127" y="231">N</text><text x="2127" y="343.500">S</text><text x="2070.500" y="286.500">W</text><text x="2183.500" y="286.500">E</text></g>
    <path d="M2101.300 253.500h51.200v51h-51.200z" fill="#a5a5a5"/><path d="M2111 263h31v32h-31z" fill="#98989c"/>
    <text x="2127" y="283.500" class="nesw" text-anchor="middle" font-size="13" font-weight="700" fill="#45474c" textLength="22" lengthAdjust="spacingAndGlyphs">TOP</text>
    <path d="M2140.500 254v50" stroke="#d8d8d8" stroke-width="2.500"/>
    <rect x="2103.500" y="367" width="47" height="16.500" rx="3" fill="#8b8b94" stroke="#a8a8b0"/><text x="2107.500" y="379" fill="#3d3d45" textLength="24">WCS</text><path d="M2138 373h8l-4 4z" fill="none" stroke="#c8c8d0"/><path d="M2140.500 367v16" stroke="#ddd" stroke-width="2.500" opacity=".6"/>
    <path d="M2149 190.500h10M2170 185.500h6.500v6.500h-6.500zM2172 184.500h6v6" fill="none" stroke="#e8e8e8" stroke-width="2.400"/><path d="M2190 184.500l7 7.500M2197 184.500l-7 7.500" stroke="#e8e8e8" stroke-width="2.200"/>

    <rect x="2174.500" y="409.500" width="31" height="211" rx="3" fill="#454545" stroke="#565656"/>
    <g fill="none" stroke="#2b2b2b" stroke-width="1.300"><circle cx="2200" cy="414" r="3.500"/><path d="M2198.500 412.500l3 3M2201.500 412.500l-3 3"/><path d="M2190 428.500h10v10a10.500 10.500 0 1 1-10-10z"/><circle cx="2190" cy="439" r="6.500"/><path d="M2184 492c-2-5-4-7-6-10 2-1 4 1 6 4l-2-12c2-1 3 2 4 9l1-12c2 0 2 3 2 11l3-11c2 1 1 4 0 12l4-8c2 1 0 6-1 10-1 5-3 6-3 8z"/><path d="M2179 500l14 13M2193 499l-14 14M2179 504v-5h5M2188 499h5v5M2179 508v5h5"/><circle cx="2194" cy="513" r="5"/><path d="M2197 517l5 4" stroke-width="3"/><path d="M2187 557v-14h-3l5-6 5 6h-3v14z"/><path d="M2184 545c-8 3-6 8 4 8s15-3 12-6-5-2-7-3"/><path d="M2178.500 578.500h6v6h-6zM2186.500 578.500h6v6h-6zM2194.500 578.500h6v6h-6zM2178.500 587.500h16v13h-16z"/><circle cx="2200" cy="615" r="3.500"/><path d="M2198 615h4"/></g>
    <path d="M2187.500 458h6l-3 3zM2187.500 528h6l-3 3zM2187.500 566h6l-3 3zM2183 590l7 4-7 4zM2181 552l5-4v7z" fill="#292929"/><path d="M2177 465.500h26M2177 573.500h26" stroke="#606060"/>
  </svg>
  <div class="history"><span>Command: '_.zoom</span><span>Specify corner of window, enter a scale factor (nX or nXP), or</span><span>[All/Center/Dynamic/Extents/Previous/Scale/Window/Object] &lt;real time&gt;: _e</span></div>
  <div class="cmd"><div class="cmdl"><svg width="53" height="25"><path d="M5 5v16M7.500 5v16" stroke="#8d8d8d" stroke-width="1.500" stroke-dasharray="1.500 1.500"/><path d="M14.500 8l8 8.500M22.500 8l-8 8.500" stroke="#bbb" stroke-width="2.200"/><path d="M38 10l8 9" stroke="#ccc" stroke-width="3"/><path d="M35 6c-2 4 2 7 5 4s-1-5-2-4l1 3-2 1z" fill="#ccc"/></svg></div>
    <svg class="prompt" width="28" height="15"><rect x=".5" y=".5" width="14" height="14" fill="#8f949a" stroke="#5d6268"/><path d="M3 4l4 3.500L3 11M8 12h5" stroke="#222" fill="none" stroke-width="1.500"/><path d="M18 5h5l-2.500 4z" fill="#444"/></svg><em>Type a command</em><i class="c up"></i></div>
  </div>

  <aside class="palette">
    <div class="ptitle"><b class="grip"></b>PROPERTIES</div>
    <div class="pbar"><div class="pcombo">No selection<span><i class="c"></i></span></div>
      <svg width="18" height="20"><path d="M2 4h8v10H2z" fill="#b5d1f3" stroke="#223"/><path d="M7 8h8v9H7z" fill="#d5e6fb" stroke="#223"/><path d="M12.500 1v8M8.500 5h8" stroke="#0b5a0b" stroke-width="4"/><path d="M12.500 2v6M9.500 5h6" stroke="#2fd02f" stroke-width="2"/></svg>
      <svg width="18" height="20"><path d="M9 3v14M2 10h14" stroke="#fff" stroke-width="1.200"/><rect x="6.500" y="7.500" width="5" height="5" fill="#5b5b5b" stroke="#fff"/></svg>
      <svg width="18" height="20"><use href="#quick"/></svg></div>
    <h4>General</h4>
    <dl><dt>Color</dt><dd><b class="psw"></b>ByLayer</dd><dt>Layer</dt><dd>0</dd><dt>Linetype</dt><dd><b class="pln a"></b>ByLayer</dd><dt>Linetype scale</dt><dd>1</dd><dt>Lineweight</dt><dd><b class="pln"></b>ByLayer</dd><dt>Transparency</dt><dd>ByLayer</dd><dt>Thickness</dt><dd>0</dd></dl>
    <h4>3D Visualization</h4>
    <dl><dt>Material</dt><dd>ByLayer</dd></dl>
    <h4>Plot style</h4>
    <dl><dt>Plot style</dt><dd class="ro">ByColor</dd><dt>Plot style table</dt><dd>None</dd><dt>Plot table attached to</dt><dd class="ro">Model</dd><dt>Plot table type</dt><dd class="ro">Not available</dd></dl>
    <h4>View</h4>
    <dl><dt>Center X</dt><dd class="ro">2566302.4103</dd><dt>Center Y</dt><dd class="ro">-83781.5333</dd><dt>Center Z</dt><dd class="ro">0</dd><dt>Height</dt><dd class="ro">16524.0233</dd><dt>Width</dt><dd class="ro">34211.1453</dd></dl>
    <h4>Misc</h4>
    <dl><dt>Annotation scale</dt><dd>1:1</dd><dt>UCS icon On</dt><dd>Yes</dd><dt>UCS icon at origin</dt><dd>Yes</dd><dt>UCS per viewport</dt><dd>Yes</dd><dt>UCS Name</dt><dd></dd><dt>Visual Style</dt><dd>2D Wireframe</dd></dl>
  </aside>
</main>

<footer class="status">
  <svg class="layouts" width="240" height="28" viewBox="0 1381 240 28">
    <path d="M8 1381c7 2 5 18 12 18h40c7 0 6-14 10-18z" fill="#757575"/><path d="M70 1381c5 3 4 18 10 18h46c6 0 7-14 9-18z" fill="#545454"/><path d="M135 1381c5 3 4 18 10 18h46c6 0 7-14 10-18z" fill="#545454"/><path d="M206 1382h20c1 10-3 16-8 16h-14c0-6 0-12 2-16z" fill="#4f4f4f"/>
    <text x="24" y="1394" font-weight="700" fill="#fff" textLength="34">Model</text><text x="81" y="1394" fill="#a9a9a9" textLength="41">Layout1</text><text x="146" y="1394" fill="#a9a9a9" textLength="42">Layout2</text><path d="M211 1390.300h8M215 1386.500v8" stroke="#ccc" stroke-width="2"/></svg>
  <div class="cells">
    <div class="cell" style="width:212px"><span class="coord">2551982.1404, -91790.4866, 0.0000</span></div>
    <div class="cell" style="width:49px"><span style="width:47px">MODEL</span></div>
    <div class="cell" style="width:65px"><span style="width:25px"><svg width="16" height="16"><path d="M2.500 1v14M5.500 1v14M8.500 1v14M11.500 1v14M14 1v14M0 3.500h16M0 7.500h16M0 11.500h16" stroke="#ccc" stroke-width=".9" stroke-dasharray="2 .6"/></svg></span><span style="width:23px"><svg width="16" height="16"><path d="M1 1.500h14M1 4.500h14M1 7.500h14M1 10.500h14M1 13.500h14" stroke="#ddd" stroke-dasharray="1 2"/></svg></span><span style="width:16px"><i class="c lg"></i></span></div>
    <div class="cell" style="width:218px"><span class="blue" style="width:25px"><svg width="18" height="16"><path d="M1 4.500h6M4 1.500v6" stroke="#2b8cff" stroke-width="1.500"/><rect x="7" y="9" width="10" height="4" fill="#2b8cff"/></svg></span><span class="div" style="width:25px"><svg width="16" height="16"><path d="M2 2v11h12M2 8h4v5" stroke="#ccc" fill="none" stroke-width="1.300"/></svg></span><span style="width:22px"><svg width="16" height="16"><circle cx="7.500" cy="8" r="6" fill="none" stroke="#bbb" stroke-width="1.300"/><path d="M7 8h9M7 8l5-5" stroke="#bbb" stroke-width="1.300"/></svg></span><span style="width:16px"><i class="c lg"></i></span><span style="width:23px"><svg width="18" height="20"><path d="M9 1v18" stroke="#999" stroke-width="1.300"/><path d="M1 2l16 15" stroke="#aaa" stroke-width="1.500"/></svg></span><span style="width:17px"><i class="c lg"></i></span><span class="div blue" style="width:23px"><svg width="16" height="16"><path d="M1 14L13 2M0 14h16" stroke="#2b8cff" stroke-width="1.500"/><rect x="5" y="6" width="4" height="4" fill="#2b8cff"/></svg></span><span style="width:27px"><svg width="16" height="16"><rect x="2.500" y="2.500" width="12" height="12" fill="none" stroke="#ccc"/><rect x=".5" y=".5" width="4" height="4" fill="#0f0" stroke="#000"/></svg></span><span style="width:14px"><i class="c lg"></i></span><span class="div" style="width:24px"><svg width="16" height="16"><path d="M0 2h16M0 6h7M0 10h16M0 14h9" stroke="#c4c4c4" stroke-width="1.800"/><path d="M9 6h7" stroke="#c4c4c4" stroke-width="1"/></svg></span></div>
    <div class="cell" style="width:107px"><span class="blue" style="width:24px;color:#2b8cff"><svg width="18" height="18"><use href="#person"/><circle cx="13" cy="4.500" r="2.500" fill="none" stroke="#2b8cff" stroke-width="1.300"/></svg></span><span style="width:24px;color:#b8b8b8"><svg width="18" height="18"><use href="#person"/><path d="M15 0l-3 4h3l-2 5 4-6h-3z" fill="#ccc"/></svg></span><span style="width:24px;color:#b8b8b8"><svg width="18" height="18"><use href="#person"/></svg></span><span style="width:33px" class="sc">1:1<i class="c lg"></i></span></div>
    <div class="cell" style="width:66px"><span style="width:25px"><svg width="16" height="16"><circle cx="8" cy="8" r="4" fill="none" stroke="#c4c4c4" stroke-width="3.500"/><circle cx="8" cy="8" r="6" fill="none" stroke="#c4c4c4" stroke-width="1.800" stroke-dasharray="2.300 2.400"/></svg></span><span style="width:14px"><i class="c lg"></i></span><span class="div" style="width:25px"><svg width="16" height="16"><path d="M8 1v14M1 8h14" stroke="#c8c8c8" stroke-width="1.600"/></svg></span></div>
    <div class="cell" style="width:99px"><span style="width:25px"><svg width="6" height="16"><path d="M1 1h4v2H3v1h2v1H3v1h2v2H3v1h2v1H3v1h2v3H1z" fill="#c4c4c4"/></svg></span><span style="width:51px">Decimal</span><span style="width:21px"><i class="c lg"></i></span></div>
    <div class="cell" style="width:26px"><span style="width:24px"><svg width="17" height="16"><path d="M1 1h6v6H1zM7 10l4 5H3z" fill="none" stroke="#bbb" stroke-width="1.300"/><circle cx="12.500" cy="6" r="3" fill="none" stroke="#bbb" stroke-width="1.300"/></svg></span></div>
    <div class="cell" style="width:26px"><span class="blue" style="width:24px"><svg width="18" height="18"><circle cx="9" cy="9" r="7.300" fill="#0e4f94" stroke="#2b8cff" stroke-width="1.500"/><path d="M8 10l5-5" stroke="#5aa7ff" stroke-width="1.500"/></svg></span></div>
    <div class="cell" style="width:24px"><span style="width:22px"><svg width="18" height="18"><path d="M2 1h8l4 4v11H2z" fill="#8fb2d8"/><path d="M2 10l6-2 5 2v6H2z" fill="#f1cf34"/><circle cx="5" cy="5" r="2.500" fill="none" stroke="#fff"/><path d="M8 13l3 3 6-6" stroke="#2cae2c" stroke-width="2" fill="none"/></svg></span></div>
    <div class="cell" style="width:50px"><span style="width:24px"><svg width="16" height="16"><rect x=".5" y="2.500" width="15" height="11" fill="none" stroke="#c4c4c4"/><path d="M9 4h5v5zM2 7v5h5z" fill="#c4c4c4"/><path d="M9 7l3-2M4 11l3-2" stroke="#c4c4c4"/></svg></span><span style="width:24px"><svg width="16" height="16"><path d="M0 3h16M0 8h16M0 13h16" stroke="#c8c8c8" stroke-width="1.800"/></svg></span></div>
  </div>
</footer>

<footer class="taskbar">
  <div class="t"><svg width="18" height="18"><path d="M1 3.500l7-1v6H1zM9 2.300l8-1.300v7.500H9zM1 9.500h7v6l-7-1zM9 9.500h8V17l-8-1.300z" fill="#000"/></svg></div>
  <div class="t run"><svg width="18" height="18"><path d="M9 9L2.100 5A8 8 0 0 1 15.900 5z" fill="#e33b2e"/><path d="M9 9l6.900-4A8 8 0 0 1 9 17z" fill="#fbc116"/><path d="M9 9l0 8A8 8 0 0 1 2.100 5z" fill="#2ea24a"/><circle cx="9" cy="9" r="3.800" fill="#fff"/><circle cx="9" cy="9" r="3" fill="#4285f4"/></svg></div>
  <div class="t run"><svg width="18" height="18"><path d="M1 2h6l2 2h8v12H1z" fill="#f7c948"/><path d="M1 7h16v9H1z" fill="#fddb7a"/><path d="M4 17v-7h10v7h-3v-4H7v4z" fill="#2f8fe0"/></svg></div>
  <div class="t run"><svg width="18" height="18"><rect x="2.500" y="2.500" width="12" height="14" fill="#fff" stroke="#444"/><path d="M3 9h11v7H3z" fill="#7cc93a"/><path d="M3 2h12" stroke="#555" stroke-width="2" stroke-dasharray="1 1"/><path d="M17 2l-7 10" stroke="#e7a416" stroke-width="2.500"/><path d="M17 1l-1.500 2.500" stroke="#c01818" stroke-width="2.500"/></svg></div>
  <div class="t run"><svg width="18" height="18"><rect x="1.500" y="1.500" width="15" height="15" fill="#000" stroke="#f6ee3a" stroke-width="1.400"/><text x="3.500" y="10" font-size="8" font-weight="700" fill="#fff" textLength="11" lengthAdjust="spacingAndGlyphs">PC</text><path d="M4 13.500h6" stroke="#fff" stroke-width="1.400"/></svg></div>
  <div class="t"><svg width="18" height="18"><ellipse cx="9" cy="7" rx="7.500" ry="5" transform="rotate(-20 9 7)" fill="#fff" stroke="#e05050" stroke-width="1.600"/><path d="M3 12l10-8M6 6l6 3" stroke="#e05050"/><path d="M9 17V9m1 1h4c3 0 3 4 0 4h-4" stroke="#2f8fd0" stroke-width="2" fill="none"/></svg></div>
  <div class="t run act"><svg width="17" height="18"><rect width="17" height="18" fill="#f7dcd6"/><use href="#acad" x="2" y="1" width="13" height="16"/></svg></div>
  <div class="tray">
    <svg width="14" height="16"><path d="M1 11l6-6 6 6" fill="none" stroke="#111" stroke-width="1.300"/></svg>
    <svg width="18" height="18"><path d="M5.500 4.500h11v8h-11zM8 15.500h6M11 12v3M3 8v6h3" fill="none" stroke="#111" stroke-width="1.200"/><path d="M1.500 3.500h3v4h-3z" fill="#fff" stroke="#111"/></svg>
    <svg width="18" height="18"><path d="M1.500 7h3l3-3.500v11L4.500 11h-3z" fill="none" stroke="#111" stroke-width="1.200"/><path d="M9.500 7c1 1.500 1 3 0 4.500M11.500 5.500c2 2 2 5 0 7" fill="none" stroke="#111" stroke-width="1.200"/><path d="M13.500 3.500c3 3 3 8 0 11" fill="none" stroke="#888"/></svg>
    <time>22:20</time>
    <svg class="note" width="18" height="18"><path d="M1.500 2.500h15v11h-5.500l-2.500 3-2.500-3H1.500z" fill="none" stroke="#111" stroke-width="1.200"/></svg><b></b>
  </div>
</footer>
</div>
</body>
</html>
```
FILE: styles.css
```css
* { box-sizing: border-box; }
body { margin: 0; background: #5b5b5b; font: 11.3px/14px "Noto Sans", "Open Sans", sans-serif; color: #f0f0f0; }
h3, h4, dl, dd, dt { margin: 0; font: inherit; }
svg { display: block; flex: none; }
.defs { position: absolute; }
.app { width: 2560px; height: 1440px; display: flex; flex-direction: column; overflow: hidden; }
.c { display: block; flex: none; width: 5px; height: 4px; background: #f0f0f0; clip-path: polygon(0 0, 100% 0, 50% 100%); }
.c.lg { width: 8px; height: 5px; }
.c.dark { background: #222; width: 6px; }
.c.dim { background: #999; }

/* title bar */
.titlebar { height: 24px; flex: none; background: #fff; display: flex; position: relative; z-index: 2; }
.appbtn { width: 41px; height: 41px; flex: none; border: 1px solid #111; background: linear-gradient(#d8d8d8, #8f8f8f 50%, #6a6a6a); display: flex; align-items: center; padding: 0 0 6px 4px; gap: 3px; }
.qat { width: 214px; flex: none; background: linear-gradient(#a0a0a0, #5c5c5c); border-top: 1px solid #555; display: flex; align-items: center; padding-left: 8px; gap: 6px; }
.qat .c { margin: 0 5px 0 -2px; }
.qat .c.dim { margin: 0 0 0 -1px; }
.caption { flex: 1; color: #111; display: flex; gap: 12px; padding: 5px 0 0 714px; letter-spacing: .1px; }
.info { width: 447px; flex: none; background: linear-gradient(#a5a5a5, #606060); border-top: 1px solid #555; display: flex; align-items: center; }
.info .arrow { width: 13px; padding-left: 5px; }
.search { width: 181px; height: 22px; background: #757575; border: 1px solid #333; color: #c4c4c4; font-style: italic; padding: 3px; letter-spacing: .1px; }
.bino { margin-left: 4px; } .user { margin-left: 6px; }
.sign { margin-left: 3px; width: 83px; padding-top: 1px; }
.cart { margin-left: 11px; } .a360 { margin: 0 5px 0 6px; }
.vsep { width: 1px; height: 22px; background: #8a8a8a; margin-left: 9px; }
.help { margin: 0 7px 0 8px; }
.winbtns { width: 163px; flex: none; display: flex; gap: 34px; padding: 5px 0 0 41px; }

/* ribbon tabs */
.tabs { height: 21px; flex: none; background: #535353; border-top: 1px solid #2b2b2b; border-bottom: 1px solid #2b2b2b; display: grid; grid-template-columns: 52px 49px 69px 77px 45px 63px 58px 62px 47px 95px 89px 100px; padding-left: 46px; color: #d4d4d4; position: relative; }
.tabs span { text-align: center; padding-top: 3px; white-space: nowrap; }
.tabs .on { color: #fff; background: linear-gradient(#6b6b6b, #5c5c5c); border: 1px solid #2b2b2b; border-bottom: 0; margin: 2px 1px -1px 0; padding-top: 0; }
.mini { display: flex; align-items: center; gap: 5px; padding-left: 21px; }

/* ribbon panels */
.ribbon { height: 99px; flex: none; display: flex; padding-left: 2px; background: linear-gradient(#4c4c4c, #353535); border-bottom: 1px solid #8d8d8d; }
.panel { flex: none; background: #5b5b5b; border-right: 1px solid #3f3f3f; display: flex; flex-direction: column; height: 98px; border-bottom: 2px solid #333; }
.panel .body { height: 79px; display: flex; padding-top: 4px; }
.panel h3 { height: 17px; background: linear-gradient(#4c4c4c, #474747); display: flex; align-items: center; justify-content: center; gap: 5px; margin-left: 1px; color: #fff; position: relative; }
.dlg { position: absolute; right: 4px; top: 7px; }
.big { flex: none; display: flex; flex-direction: column; align-items: center; text-align: center; line-height: 15px; white-space: nowrap; padding-bottom: 4px; }
.big svg, .big .bigA { height: 36px; margin-bottom: 3px; flex: none; }
.big .c { margin-top: 2px; }
.bigA { font: 37px/35px "Noto Sans", sans-serif; color: #e4e4e4; display: block; }
.big.ins { margin-top: -1px; }
.row { height: 24px; display: flex; align-items: center; gap: 4px; white-space: nowrap; }
.draw { width: 224px; }
.draw .big:nth-child(1) { width: 42px; } .draw .big:nth-child(2) { width: 45px; } .draw .big:nth-child(3) { width: 54px; } .draw .big:nth-child(4) { width: 39px; }
.draw .col { margin-left: 3px; }
.draw .row { gap: 7px; }
.modify { width: 250px; }
.modify .col:nth-child(1) { margin-left: 6px; width: 72px; } .modify .col:nth-child(2) { width: 69px; } .modify .col:nth-child(3) { width: 75px; }
.modify .row .c { margin-left: auto; margin-right: 14px; }
.annotation { width: 189px; }
.annotation .big:nth-child(1) { margin-left: 4px; width: 40px; } .annotation .big:nth-child(2) { width: 64px; }
.annotation .col { margin-left: 4px; width: 72px; }
.annotation .row .c { margin-left: auto; margin-right: 4px; }
.layers { width: 272px; }
.layers .big { width: 62px; margin: 0 1px 0 0; }
.icons { gap: 6px; }
.icons svg:last-of-type { margin-right: -2px; }
.layers .row { padding-left: 2px; }
.combo { background: linear-gradient(#6f6f6f, #545454); border: 1px solid #333; display: flex; align-items: center; height: 22px; margin-bottom: 1px; }
.combo .c { margin-left: auto; margin-right: 2px; }
.combo.layer { width: 208px; margin: 1px 0; gap: 1px; padding-left: 4px; }
.sw { display: block; width: 15px; height: 14px; background: #fff; border: 1px solid #222; margin: 0 3px; flex: none; }
.block { width: 161px; }
.block .big { width: 44px; }
.block .col { margin-left: 1px; width: 116px; }
.block .row .c { margin-left: auto; margin-right: 6px; }
.block .row { gap: 3px; }
.props { width: 265px; }
.props .big { width: 65px; }
.mid { width: 18px; margin-top: 1px; display: flex; flex-direction: column; gap: 2px; }
.combos { width: 180px; display: flex; flex-direction: column; gap: 1px; padding-top: 1px; }
.c1 .sw { margin: 0 11px 0 12px; } .ln { height: 1px; background: #fff; display: block; }
.c2 .ln { width: 59px; margin: 0 2px 0 8px; } .c3 .ln { width: 64px; margin: 0 2px 0 3px; }
.groups { width: 69px; }
.groups .big { width: 43px; padding-left: 1px; } .groups .row { width: 24px; }
.util { width: 97px; } .util .big { width: 72px; } .util .col { margin-left: 1px; }
.clip { width: 80px; } .clip .big { width: 56px; } .clip .col { margin-left: 1px; }
.view { width: 63px; } .view .big { width: 63px; }
.view h3 { padding-right: 14px; }

/* drawing tabs */
.files { height: 29px; flex: none; background: #373737; border-bottom: 4px solid #5b5b5b; }
.files svg { margin-bottom: -1px; }

/* drawing area */
.work { height: 1208px; flex: none; display: flex; }
.canvas { width: 2210px; flex: none; background: #000; position: relative; overflow: hidden; }
.cad { font-family: Roboto, sans-serif; }
.thin { font-weight: 100; }
.hd { font-weight: 500; }
.deg { font-weight: 400; }
.nesw { font-family: "Liberation Sans", sans-serif; }
.history { position: absolute; left: 540px; top: 1124px; display: flex; flex-direction: column; align-items: flex-start; gap: 5px; font: 11.64px/15px "DejaVu Sans Mono", monospace; color: #a0a0a0; }
.history span { background: #3b3b3b; border-radius: 2px; padding: 0 2px; white-space: pre; }
.history span:first-child { background: #333; color: #828282; }
.history span:last-child { background: #454545; color: #b8b8b8; }
.cmd { position: absolute; left: 481px; top: 1181px; width: 1249px; height: 26px; background: linear-gradient(#b2b2b2 21px, #fff 22px 24px, #aaa 25px); border: 1px solid #555; display: flex; align-items: center; }
.cmdl { width: 53px; height: 24px; background: linear-gradient(#555, #444 20px, #777 22px, #555); }
.prompt { margin-left: 5px; } .cmd em { font: italic 11.64px/14px "DejaVu Sans Mono", monospace; color: #6c6c6c; margin-left: 2px; }
.c.up { background: #111; transform: scaleY(-1); width: 8px; margin-left: auto; margin-right: 3px; }

/* properties palette */
.palette { width: 350px; background: #5b5b5b; padding: 2px 19px 0 12px; border-left: 1px solid #4c4c4c; }
.ptitle { height: 20px; margin: 0 -19px 0 -10px; background: #525252; border-radius: 6px 6px 0 0; padding: 1px 0 0 4px; display: flex; gap: 6px; letter-spacing: -.15px; }
.grip { width: 4px; height: 9px; margin-top: 4px; background: repeating-linear-gradient(#3c3c3c 0 1px, transparent 1px 2px); }
.pbar { display: flex; align-items: center; margin: 12px -14px 4px -5px; height: 23px; gap: 6px; }
.pcombo { width: 260px; height: 23px; background: linear-gradient(#757575, #5e5e5e); border: 1px solid #383838; padding: 3px 0 0 3px; display: flex; justify-content: space-between; }
.pcombo span { width: 14px; height: 21px; margin-top: -3px; border-left: 1px solid #383838; display: flex; align-items: center; justify-content: center; }
.palette h4 { height: 20px; width: 320px; margin-left: -1px; background: #484848; border: 1px solid #333; font-weight: 700; padding: 2px 0 0 6px; color: #fff; display: flex; justify-content: space-between; }
.palette h4::after { content: ""; width: 6px; height: 2px; background: #fff; margin: 7px 6px 0 0; }
.palette dl { display: grid; grid-template-columns: 138px 163px; grid-auto-rows: 19px; margin: 0 0 3px 17px; width: 302px; border-left: 1px solid #505050; }
.palette dt, .palette dd { border-bottom: 1px solid #505050; border-right: 1px solid #505050; white-space: nowrap; padding: 3px 0 0 6px; line-height: 14px; }
.palette dd { padding: 2px 0 0 2px; display: flex; align-items: flex-start; }
.palette .ro { color: #b0b0b0; }
.psw { width: 10px; height: 10px; background: #fff; border: 1px solid #000; margin: 2px 5px 0 0; }
.pln { width: 65px; height: 1px; background: #fff; margin: 7px 3px 0 0; } .pln.a { width: 62px; margin-left: 3px; margin-right: 4px; }

/* status bar */
.status { height: 29px; flex: none; background: #373737; display: flex; justify-content: space-between; }
.cells { display: flex; gap: 1px; padding: 1px 0 2px; width: 953px; }
.cell { flex: none; height: 26px; background: #4f4f4f; border: 1px solid #7b7b7b; display: flex; }
.cell span { display: flex; align-items: center; justify-content: center; height: 24px; flex: none; color: #fff; }
.cell .coord { width: 210px; padding-left: 6px; white-space: nowrap; letter-spacing: .27px; }
.cell .div { border-left: 1px solid #7b7b7b; }
.cell .sc { gap: 4px; letter-spacing: -.3px; }
.blue svg { filter: drop-shadow(0 0 2px #0b5fd0); }

/* taskbar */
.taskbar { height: 30px; flex: none; background: linear-gradient(90deg, #ccd9e0, #d0d5e2 30%, #d3d7e1); display: flex; }
.t { width: 28px; margin-right: 9px; height: 30px; display: flex; justify-content: center; padding-top: 6px; }
.t:first-child { margin-left: 4px; margin-right: 11px; }
.t.run { border-bottom: 2px solid #00b7c3; }
.t.act { width: 36px; background: #eceff2; margin-left: -4px; }
.tray { margin-left: auto; display: flex; align-items: center; color: #111; }
.tray svg:nth-child(2) { margin-left: 8px; } .tray svg:nth-child(3) { margin-left: 6px; }
.tray time { margin-left: 8px; width: 28px; letter-spacing: -.4px; } .tray .note { margin-left: 16px; }
.tray b { width: 1px; height: 30px; background: #a5abb5; margin: 0 4px 0 19px; }
```
